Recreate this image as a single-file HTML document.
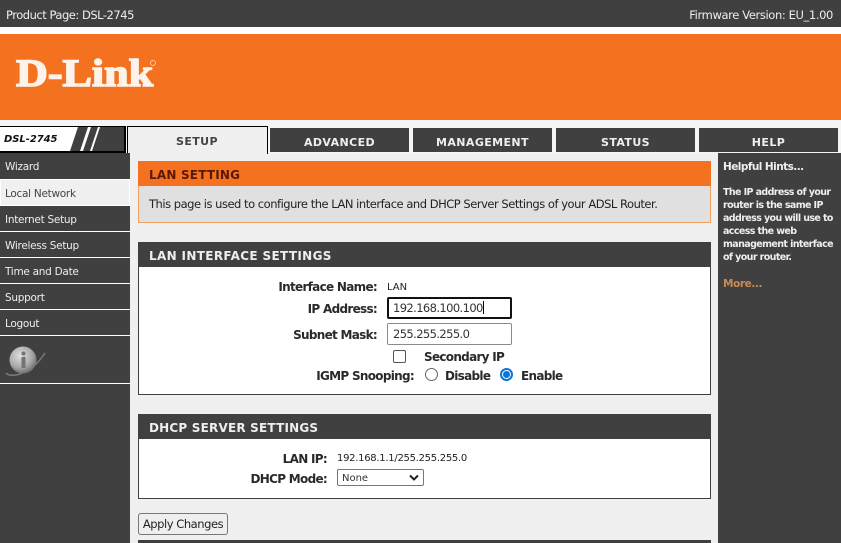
<!DOCTYPE html>
<html><head><meta charset="utf-8"><style>
html,body{margin:0;padding:0;width:841px;height:543px;overflow:hidden;background:#f0f0f0}
*{box-sizing:border-box}
div,span,a{position:absolute;white-space:nowrap}
body{font-family:"DejaVu Sans","Liberation Sans",sans-serif;font-size:11px;color:#222}
.b{background:#404040}
.tab{top:128px;height:24px;width:139px;background:#404040;color:#eee;font:bold 11px/29px "DejaVu Sans",sans-serif;text-align:center;letter-spacing:.4px}
.nav{left:0;width:130px;height:25px;background:#404040;color:#eee;font-size:10.5px;line-height:29px;padding-left:5px;letter-spacing:-.28px}
.h{left:138px;width:573px;height:25px;background:#404040;color:#eee;font:bold 12px/28px "DejaVu Sans",sans-serif;padding-left:11px;letter-spacing:.35px}
.l{font-weight:bold;font-size:12px;text-align:right;color:#2a2a2a;letter-spacing:-.7px;line-height:14px}
.v{font-size:10px;color:#222;line-height:14px}
.in{left:387px;width:125px;height:22px;background:#fff;border:1px solid #8a8a8a;border-radius:2px;font-size:11.5px;line-height:21px;padding-left:5px;color:#333;letter-spacing:-.6px}
.hint{left:723px;color:#eee;font-weight:bold;font-size:9.5px;line-height:13px;letter-spacing:-.6px}
</style></head><body>
<div class="b" style="left:0;top:0;width:841px;height:27px"></div>
<div style="left:6px;top:8px;color:#eee;font-size:11.5px;line-height:14px;letter-spacing:-.48px">Product Page: DSL-2745</div>
<div style="right:8px;top:8px;color:#eee;font-size:11.5px;line-height:14px;letter-spacing:-.38px">Firmware Version: EU_1.00</div>
<div style="left:0;top:27px;width:841px;height:7px;background:#fff"></div>
<div style="left:0;top:34px;width:841px;height:86px;background:#f47120"></div>
<div style="left:16px;top:51px;color:#fdf3ea;font:bold 39px/46px 'Liberation Serif',serif;-webkit-text-stroke:1.5px #fdf3ea;transform:scaleX(1.13);transform-origin:0 0">D-Link</div>
<div style="left:150px;top:60px;width:6px;height:6px;border-radius:50%;border:1px solid #f9c8a5"></div>
<div style="left:0;top:120px;width:841px;height:34px;background:#f5f5f5"></div>
<div style="left:0;top:126px;width:126px;height:27px;background:#000"></div>
<div style="left:0;top:127px;width:124px;height:24px;background:#fff"></div>
<svg style="position:absolute;left:0;top:127px" width="124" height="24"><polygon points="70,24 78,0 124,0 124,24" fill="#404040"/><polygon points="80,24 88,0 91,0 83,24" fill="#fff"/><polygon points="90,24 98,0 100,0 92,24" fill="#fff"/></svg>
<div style="left:4px;top:133px;font:italic bold 10px/13px 'DejaVu Sans',sans-serif;color:#111;letter-spacing:-.05px">DSL-2745</div>
<div style="left:127px;top:126px;width:141px;height:28px;background:#f0f0f0;border:1px solid #000;border-bottom:0"></div>
<div style="left:127px;top:127px;width:140px;font:bold 11px/29px 'DejaVu Sans',sans-serif;text-align:center;color:#444;letter-spacing:.4px">SETUP</div>
<div class="tab" style="left:270px">ADVANCED</div>
<div class="tab" style="left:413px">MANAGEMENT</div>
<div class="tab" style="left:556px">STATUS</div>
<div class="tab" style="left:699px">HELP</div>

<div class="b" style="left:0;top:153px;width:130px;height:390px"></div>
<div class="nav" style="top:154px;line-height:27px">Wizard</div>
<div style="left:0;top:179px;width:130px;height:27px;background:#f0f0f0;border:1px solid #fff;color:#444;font-size:10.5px;line-height:28px;padding-left:4px;letter-spacing:-.28px">Local Network</div>
<div class="nav" style="top:206px">Internet Setup</div>
<div style="left:0;top:231px;width:130px;height:1px;background:#fff"></div>
<div class="nav" style="top:232px">Wireless Setup</div>
<div style="left:0;top:257px;width:130px;height:1px;background:#fff"></div>
<div class="nav" style="top:258px">Time and Date</div>
<div style="left:0;top:283px;width:130px;height:1px;background:#fff"></div>
<div class="nav" style="top:284px">Support</div>
<div style="left:0;top:309px;width:130px;height:1px;background:#fff"></div>
<div class="nav" style="top:310px">Logout</div>
<div style="left:0;top:335px;width:130px;height:1px;background:#fff"></div>
<div style="left:0;top:383px;width:130px;height:1px;background:#fff"></div>
<svg style="position:absolute;left:2px;top:345px" width="44" height="36"><defs><radialGradient id="g" cx=".4" cy=".35" r=".7"><stop offset="0" stop-color="#e0e0e0"/><stop offset=".6" stop-color="#aaa"/><stop offset="1" stop-color="#666"/></radialGradient></defs><path d="M4 28 C8 33 28 31 43 8" fill="none" stroke="#7a7a7a" stroke-width="1.5"/><circle cx="21" cy="15" r="13.5" fill="url(#g)"/><rect x="19.5" y="12" width="4" height="11" fill="#747474"/><circle cx="21.5" cy="8.5" r="2" fill="#747474"/></svg>

<div class="b" style="left:718px;top:153px;width:123px;height:390px"></div>
<div class="hint" style="top:161px;font-size:10.5px;letter-spacing:-.55px">Helpful Hints...</div>
<div class="hint" style="top:186px">The IP address of your<br>router is the same IP<br>address you will use to<br>access the web<br>management interface<br>of your router.</div>
<div class="hint" style="top:278px;color:#c98a54;font-size:10.5px;letter-spacing:-.4px">More...</div>

<div style="left:138px;top:161px;width:573px;height:62px;background:#e0e0e0;border:1px solid #f0a060"></div>
<div style="left:138px;top:161px;width:573px;height:25px;background:#f47120;color:#5a1808;font:bold 12px/28px 'DejaVu Sans',sans-serif;padding-left:11px;letter-spacing:.2px">LAN SETTING</div>
<div style="left:149px;top:197px;font-size:11.5px;line-height:14px;color:#222;letter-spacing:-.48px">This page is used to configure the LAN interface and DHCP Server Settings of your ADSL Router.</div>

<div style="left:138px;top:242px;width:573px;height:153px;background:#fff;border:1px solid #404040"></div>
<div class="h" style="top:242px">LAN INTERFACE SETTINGS</div>
<div class="l" style="right:464px;top:280px">Interface Name:</div>
<div class="v" style="left:387px;top:281px;font-weight:normal">LAN</div>
<div class="l" style="right:464px;top:302px">IP Address:</div>
<div class="in" style="top:297px;border:2px solid #111;line-height:19px;padding-left:4px">192.168.100.100</div>
<div style="left:483px;top:301px;width:1px;height:13px;background:#000"></div>
<div class="l" style="right:464px;top:328px">Subnet Mask:</div>
<div class="in" style="top:323px">255.255.255.0</div>
<div style="left:393px;top:350px;width:13px;height:13px;border:1px solid #555;border-radius:2px;background:#fff"></div>
<div class="l" style="left:424px;top:350px">Secondary IP</div>
<div class="l" style="right:427px;top:369px">IGMP Snooping:</div>
<div style="left:425px;top:368px;width:13px;height:13px;border:1px solid #666;border-radius:50%;background:#fff"></div>
<div class="l" style="left:445px;top:369px">Disable</div>
<div style="left:500px;top:368px;width:13px;height:13px;border:2px solid #0a74d8;border-radius:50%;background:#fff"></div>
<div style="left:503px;top:371px;width:7px;height:7px;border-radius:50%;background:#0a74d8"></div>
<div class="l" style="left:521px;top:369px">Enable</div>

<div style="left:138px;top:414px;width:573px;height:85px;background:#fff;border:1px solid #404040"></div>
<div class="h" style="top:414px;letter-spacing:.2px">DHCP SERVER SETTINGS</div>
<div class="l" style="right:514px;top:452px">LAN IP:</div>
<div class="v" style="left:337px;top:452px;letter-spacing:-.28px">192.168.1.1/255.255.255.0</div>
<div class="l" style="right:514px;top:472px">DHCP Mode:</div>
<div style="left:337px;top:469px;width:87px;height:17px;background:#fff;border:1px solid #777;border-radius:2px;font-size:10px;line-height:17px;padding-left:4px;color:#333">None</div>
<svg style="position:absolute;left:408px;top:474px" width="12" height="8"><path d="M2 1.5 L6 5.5 L10 1.5" fill="none" stroke="#222" stroke-width="2"/></svg>
<div style="left:138px;top:513px;width:90px;height:22px;background:#efefef;border:1px solid #777;border-radius:3px;font-size:11.5px;line-height:20px;text-align:center;color:#222;letter-spacing:-.45px">Apply Changes</div>
<div class="b" style="left:138px;top:540px;width:573px;height:3px"></div>
</body></html>
